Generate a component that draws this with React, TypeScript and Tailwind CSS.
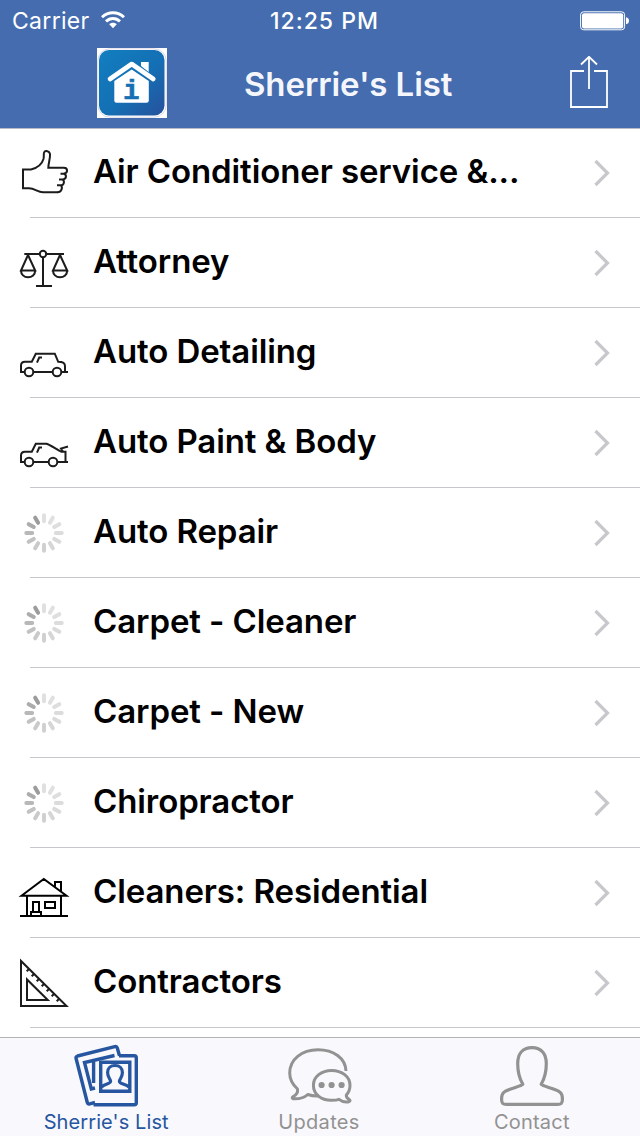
import React from 'react';

type IconName = 'thumb' | 'scales' | 'car' | 'bodyshop' | 'spinner' | 'house' | 'ruler';

interface Category {
  name: string;
  icon: IconName;
}

const categories: Category[] = [
  { name: 'Air Conditioner service &...', icon: 'thumb' },
  { name: 'Attorney', icon: 'scales' },
  { name: 'Auto Detailing', icon: 'car' },
  { name: 'Auto Paint & Body', icon: 'bodyshop' },
  { name: 'Auto Repair', icon: 'spinner' },
  { name: 'Carpet - Cleaner', icon: 'spinner' },
  { name: 'Carpet - New', icon: 'spinner' },
  { name: 'Chiropractor', icon: 'spinner' },
  { name: 'Cleaners: Residential', icon: 'house' },
  { name: 'Contractors', icon: 'ruler' },
];

// clockwise from 12 o'clock
const spokes = ['#e0e0e1', '#e0e0e1', '#dededf', '#dcdcdd', '#dadadb', '#d6d6d7', '#d0d0d1', '#cacacb', '#c2c2c3', '#b8b8b9', '#acacad', '#9c9c9e'];

const drawings: Record<IconName, React.ReactNode> = {
  thumb: (
    <>
      <path d="M38 43.2H23C17.5 43 15 39.5 9 39.3H3V20.5H11C17 19 22 15 23.5 10C24.3 7 23.2 4.5 24.3 3C25.5 1.5 29.5 1.8 30 5C30.4 9 28.4 14 28.3 18.8H43.5C48 18.6 48.3 23.8 44 24.8" />
      <path d="M40.5 24.8H44C47 26 46.5 30.4 42.5 30.4M39 30.4H42.5C45 32 44 36.3 41 36.3M37 36.3H41C43 38.5 41.5 43.2 37.5 43.2" />
    </>
  ),
  scales: (
    <>
      <path d="M4.3 15H20M26 15H44M23 18V47M16 47H32" />
      <circle cx="23" cy="15" r="3.2" />
      <path d="M8 16L1 31.5H15.2L8 16M1 31.5C1 35.5 4 38.3 8 38.3S15.2 35.5 15.2 31.5" />
      <path d="M40 16L33 31.5H47.2L40 16M33 31.5C33 35.5 36 38.3 40 38.3S47.2 35.5 47.2 31.5" />
    </>
  ),
  car: (
    <>
      <path d="M4.8 43H1V36.5C1 34 2.5 32.8 5 32.8H11.8L15.8 24.7H34.8L38.2 32.8C42.5 32.8 45 34 45 37V43M13.2 43H32.8M41.2 43H48M22 28.5H19.2L17 33.7" />
      <circle cx="9" cy="43" r="4.3" />
      <circle cx="37" cy="43" r="4.3" />
    </>
  ),
  bodyshop: (
    <>
      <path d="M4.8 43H1V36.5C1 34 2.5 32.8 5 32.8H11.8L15.8 24.7H26.5C31 26 36 30.5 41.5 32.8H45.5V43M13.2 43H28.8M37.2 43H48M48 27.5L41 29.5L43.3 33M22 28.5H19.2L17 33.7" />
      <circle cx="9" cy="43" r="4.3" />
      <circle cx="33" cy="43" r="4.3" />
    </>
  ),
  spinner: (
    <g strokeWidth="4" strokeLinecap="round">
      {spokes.map((color, i) => (
        <path key={i} d="M24 6.3V12.2" stroke={color} transform={`rotate(${i * 30} 24 24)`} />
      ))}
    </g>
  ),
  house: (
    <path stroke="#000" d="M0 47H48M1.5 26.7L23.8 10L46.5 26.7ZM7 26.7V47M41 26.7V47M35 17.5V13H41V22M13 43V33H19V43M11 47V43H21V47M25 33H35V39H25Z" />
  ),
  ruler: (
    <path d="M1 2V47H46.5ZM7 20.5V41H27.8ZM9 10L6.7 12.3M14 15L11.7 17.3M19 20L16.7 22.3M24 25L21.7 27.3M29 30L26.7 32.3M34 35L31.7 37.3M39 40L36.7 42.3" />
  ),
};

const CategoryIcon: React.FC<{ name: IconName }> = ({ name }) => (
  <svg viewBox="0 0 48 48" className="ml-5 size-12 shrink-0 overflow-visible" fill="none" stroke="#1c1c1c" strokeWidth="2">
    {drawings[name]}
  </svg>
);

const Logo: React.FC = () => (
  <svg viewBox="0 0 70 70" className="ml-[97px] size-[70px] bg-white">
    <defs>
      <linearGradient id="logo-bg" x1="0" y1="0" x2="1" y2="1">
        <stop offset="0" stopColor="#127fc0" />
        <stop offset="0.55" stopColor="#146fb4" />
        <stop offset="1" stopColor="#27519c" />
      </linearGradient>
    </defs>
    <rect x="0.8" y="0.8" width="68.4" height="68.4" rx="12" fill="none" stroke="#c4bdda" strokeWidth="0.6" />
    <rect x="2" y="2" width="65.5" height="65.5" rx="10" fill="url(#logo-bg)" />
    <path d="M44 14H51.7V24L44 18Z" fill="#fff" />
    <path d="M13 31L34.7 16L56.3 31" fill="none" stroke="#fff" strokeWidth="4.6" strokeLinecap="round" strokeLinejoin="round" />
    <path d="M17.3 33L34.7 21.6L51.8 33V52.5Q51.8 54.8 49.5 54.8H19.6Q17.3 54.8 17.3 52.5Z" fill="#fff" />
    <text x="34.4" y="50.6" textAnchor="middle" fill="#1570b3" stroke="#1570b3" strokeWidth="0.7" className="font-['Liberation_Mono'] text-[27px] font-bold">i</text>
  </svg>
);

const StatusBar: React.FC = () => (
  <div className="flex h-10 items-center pl-3 pr-[11px] text-[23px] leading-10 text-white">
    <span className="mt-px w-[89px] tracking-[0.3px]">Carrier</span>
    <svg viewBox="0 0 24 18" className="h-[18px] w-6" fill="none" stroke="#fff" strokeWidth="2.9">
      <path d="M1 6.3C7 0.2 17 0.2 23 6.3M5 10.4C9 6.5 15 6.5 19 10.4" />
      <path d="M8.2 13.3C10.2 11.3 13.8 11.3 15.8 13.3L12 17.2Z" fill="#fff" stroke="none" />
    </svg>
    <span className="ml-[145px] mt-px whitespace-nowrap font-medium tracking-[1px]">12:25 PM</span>
    <svg viewBox="0 0 49 20" className="ml-auto mt-px h-5 w-[49px]">
      <rect x="0.6" y="0.8" width="44" height="18" rx="3" fill="none" stroke="#fff" strokeWidth="1" />
      <rect x="2" y="2.2" width="41.2" height="15.2" rx="2" fill="#fff" />
      <path d="M46 6.3Q49 6.8 49 9.8T46 13.3Z" fill="#fff" />
    </svg>
  </div>
);

const Header: React.FC = () => (
  <header className="relative z-10 h-32 shrink-0 bg-[#446cae] shadow-[0_1px_0_#b5bac4]">
    <StatusBar />
    <div className="flex h-[88px] items-center pb-[2px]">
      <Logo />
      <h1 className="ml-[77px] mt-0.5 whitespace-nowrap text-[33px] font-semibold leading-10 tracking-[-0.1px] text-[#f5f6fb]">Sherrie's List</h1>
      <button className="ml-auto mr-[31px]" aria-label="Share">
        <svg viewBox="0 0 40 54" className="h-[54px] w-10" fill="none" stroke="#fff" strokeWidth="1.8">
          <path d="M15 15H2V51H38V15H25M20 33V1M12 8.5L20 0.8L28 8.5" />
        </svg>
      </button>
    </div>
  </header>
);

const CategoryRow: React.FC<{ category: Category }> = ({ category }) => (
  <li className="relative flex h-[90px] shrink-0 items-center after:absolute after:bottom-0 after:left-[30px] after:right-0 after:h-px after:bg-[#c8c7cc]">
    <CategoryIcon name={category.icon} />
    <span className="mb-1 ml-[25px] whitespace-nowrap text-[33px] font-semibold leading-10 tracking-[-0.1px] text-black">{category.name}</span>
    <svg viewBox="0 0 16 28" className="ml-auto mr-[30px] h-7 w-4" fill="none" stroke="#c7c7cc" strokeWidth="3.2">
      <path d="M1.5 2L13.5 14L1.5 26" />
    </svg>
  </li>
);

const ListIcon: React.FC = () => (
  <svg viewBox="0 0 66 64" className="h-16 w-[66px]" fill="none" stroke="#2656a0" strokeWidth="3.4" strokeLinejoin="round">
    <path d="M46.5 11.7L44.3 4Q43.7 2.2 41.8 2.7L4.5 12Q2.6 12.6 3.1 14.5L14.3 58.5Q14.8 60.3 16.7 59.8L22 58.5" />
    <path d="M20.5 60.8H61.2Q63.3 60.8 63.3 58.7V13.8Q63.3 11.7 61.2 11.7H46" />
    <path d="M41.5 11.5L11.5 18.5L18.3 45L22 44M20.6 17V39" strokeLinejoin="miter" />
    <path d="M27.7 18.2H56.8V47.2H27.7Z" strokeLinejoin="miter" />
    <path d="M28.5 43C32 39.5 37.6 40 37.6 37.2C37.6 35 34.6 34 34.6 28.5C34.6 24 37.5 21.5 42 21.5S49.4 24 49.4 28.5C49.4 34 46.4 35 46.4 37.2C46.4 40 52 39.5 56 43" strokeWidth="3.2" />
  </svg>
);

const ChatIcon: React.FC = () => (
  <svg viewBox="0 0 66 64" className="h-16 w-[66px]" fill="none" stroke="#929292" strokeWidth="3" strokeLinejoin="round">
    <path d="M60 27C59.5 14 47.5 5.7 32 5.7C15.5 5.7 3.7 15.5 3.7 29C3.7 36 6.5 40.5 11.5 45C12.2 49 9.5 51.5 6.8 52.8C5.5 54 6.5 54.8 9 54.8C14 54.8 18.5 53.5 21.8 50.5C25 51.5 29 52.3 33 51.8" />
    <path d="M45.6 26.4C35.5 26.4 27.4 32.8 27.4 41.2C27.4 50 35 56.5 45.6 56.3C48.5 56.3 51 56.2 53 55.3C56 57.7 59.5 58.4 63 57.7C64.5 57.2 64.3 56.2 63 55.4C61.2 54.3 60.2 52.8 60.3 51C63 48.2 64 45 64 41.2C64 32.8 56 26.4 45.6 26.4Z" />
    <g fill="#929292" stroke="none">
      <circle cx="35.6" cy="41" r="3.1" />
      <circle cx="45.6" cy="41" r="3.1" />
      <circle cx="55.6" cy="41" r="3.1" />
    </g>
  </svg>
);

const ContactIcon: React.FC = () => (
  <svg viewBox="0 0 66 64" className="h-16 w-[66px]" fill="none" stroke="#929292" strokeWidth="3.2" strokeLinejoin="round">
    <path d="M33 3.6C23.5 3.6 18.7 10 18.7 19.5C18.7 28 21 35.5 23.8 40.3C22 42.5 12 44 6.5 47.2C2.8 49.5 2.6 51.8 2.6 55.8C2.6 59.3 4 60.4 7.2 60.4H58.8C62 60.4 63.4 59.3 63.4 55.8C63.4 51.8 63.2 49.5 59.5 47.2C54 44 44 42.5 42.2 40.3C45 35.5 47.3 28 47.3 19.5C47.3 10 42.5 3.6 33 3.6Z" />
  </svg>
);

const TabBar: React.FC = () => (
  <nav className="grid h-[99px] shrink-0 grid-cols-3 border-t border-[#b2b2b2] bg-[#f9f8fc] text-xl leading-6 text-[#929292]">
    <a className="flex flex-col items-center pr-px pt-1.5 tracking-[0.1px] text-[#2656a0]">
      <ListIcon />
      <span className="mt-0.5">Sherrie's List</span>
    </a>
    <a className="flex flex-col items-center pr-0.5 pt-1.5 tracking-[0.3px]">
      <ChatIcon />
      <span className="mt-0.5">Updates</span>
    </a>
    <a className="flex flex-col items-center pr-[3px] pt-1.5 tracking-[0.2px]">
      <ContactIcon />
      <span className="mt-0.5">Contact</span>
    </a>
  </nav>
);

const App: React.FC = () => {
  return (
    <div className="flex h-[1136px] w-[640px] flex-col overflow-hidden bg-white font-['Inter',sans-serif]">
      <Header />
      <ul className="flex min-h-0 flex-1 flex-col overflow-hidden">
        {categories.map((category) => (
          <CategoryRow key={category.name} category={category} />
        ))}
      </ul>
      <TabBar />
    </div>
  );
};

export default App;
